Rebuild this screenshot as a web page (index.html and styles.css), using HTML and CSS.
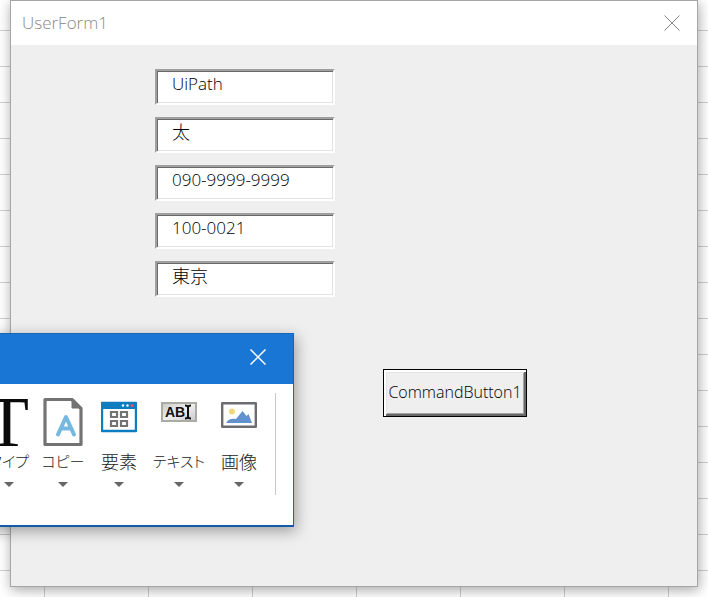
FILE: index.html
```html
<!DOCTYPE html>
<html lang="ja">
<head>
<meta charset="utf-8">
<meta name="viewport" content="width=device-width, initial-scale=1">
<title>UserForm1</title>
<link rel="stylesheet" href="styles.css">
</head>
<body>
<main class="window">
  <header class="titlebar">
    <h1 class="title">UserForm1</h1>
    <button class="close" type="button" aria-label="閉じる">
      <svg width="16" height="16" viewBox="0 0 16 16"><path d="M.5 .5l15 15M15.5 .5l-15 15"/></svg>
    </button>
  </header>
  <form class="form">
    <div class="fields">
      <input class="field" type="text" aria-label="氏名" value="UiPath">
      <input class="field kanji" type="text" aria-label="名前" value="太">
      <input class="field" type="text" aria-label="電話番号" value="090-9999-9999">
      <input class="field" type="text" aria-label="郵便番号" value="100-0021">
      <input class="field kanji" type="text" aria-label="住所" value="東京">
    </div>
    <button class="command" type="button">CommandButton1</button>
  </form>
</main>

<section class="recorder" aria-label="レコーダー">
  <header class="recorder-bar">
    <button class="close light" type="button" aria-label="閉じる">
      <svg width="16" height="16" viewBox="0 0 16 16"><path d="M.5 .5l15 15M15.5 .5l-15 15"/></svg>
    </button>
  </header>
  <div class="tools">
    <button class="tool" type="button">
      <svg class="icon" width="48" height="50" viewBox="0 0 48 50"><text class="type-letter" x="22" y="49">T</text></svg>
      <span class="label kana">タイプ</span><span class="arrow"></span>
    </button>
    <button class="tool" type="button">
      <svg class="icon" width="40" height="50" viewBox="0 0 40 50">
        <path d="M2 2.500h27l9 9v36h-36z" fill="#fff" stroke="#737373" stroke-width="3.200" stroke-linejoin="round"/>
        <path d="M29 2v9h9z" fill="#737373" stroke="#737373"/>
        <path d="M15 37.500l8-17.500 8 17.500M18 31.500h10" class="copy-mark"/>
      </svg>
      <span class="label kana">コピー</span><span class="arrow"></span>
    </button>
    <button class="tool" type="button">
      <svg class="icon" width="36" height="50" viewBox="0 0 36 50">
        <path d="M1 6h34v28H1z" fill="#fff" stroke="#0e7dbf" stroke-width="2.400" stroke-linejoin="round"/>
        <path d="M0 5.500h36v6.500H0z" fill="#0e7dbf"/>
        <circle cx="22" cy="8.500" r="1.200" fill="#fff"/><circle cx="26.500" cy="8.500" r="1.200" fill="#fff"/><circle cx="31" cy="8.500" r="1.500" fill="#ef5064"/>
        <path d="M10 15h6v5h-6zM20 15h6v5h-6zM10 24h6v5h-6zM20 24h6v5h-6z" fill="none" stroke="#737373" stroke-width="2.200"/>
      </svg>
      <span class="label">要素</span><span class="arrow"></span>
    </button>
    <button class="tool" type="button">
      <svg class="icon" width="36" height="50" viewBox="0 0 36 50">
        <defs><linearGradient id="shine" x1="0" y1="0" x2="1" y2="1"><stop offset="0" stop-color="#c9cac9"/><stop offset=".5" stop-color="#eeeeed"/><stop offset="1" stop-color="#c8c8d0"/></linearGradient></defs>
        <path d="M1 6h34v18H1z" fill="url(#shine)" stroke="#aaaba3" stroke-width="2"/>
        <text class="text-letters" x="4" y="20">AB</text>
        <path d="M24 8.500q3 0 3 2v9q0 2-3 2M30 8.500q-3 0-3 2v9q0 2 3 2" fill="none" stroke="#111" stroke-width="2"/>
      </svg>
      <span class="label kana">テキスト</span><span class="arrow"></span>
    </button>
    <button class="tool" type="button">
      <svg class="icon" width="36" height="50" viewBox="0 0 36 50">
        <path d="M1.200 6.200h33.600v23.600H1.200z" fill="#fff" stroke="#6c6d70" stroke-width="2.400" stroke-linejoin="round"/>
        <circle cx="11" cy="14.500" r="3" fill="#f0d878"/>
        <path d="M5 26c2-4 6-5 10-4l6.500-8 4 5 2-2 3.500 9z" fill="#6292cd"/>
      </svg>
      <span class="label">画像</span><span class="arrow"></span>
    </button>
  </div>
</section>
</body>
</html>
```

FILE: styles.css
```css
* {
  box-sizing: border-box;
}

body {
  margin: 0;
  min-height: 100vh;
  padding: 0 10px 10px;
  overflow: hidden;
  display: flex;
  position: relative;
  font-family: "Open Sans", "Noto Sans CJK JP", sans-serif;
  /* spreadsheet gridlines */
  background-color: #fff;
  background-image:
    linear-gradient(#d0d0d0 1px, transparent 1px),
    linear-gradient(90deg, #d0d0d0 1px, transparent 1px);
  background-size: 100% 36px, 104px 100%;
  background-position: 0 30px, 44px 0;
}

button {
  margin: 0;
  padding: 0;
  border: 0;
  background: none;
  color: inherit;
  font: inherit;
}

svg {
  display: block;
}

.window {
  flex: 1;
  display: flex;
  flex-direction: column;
  background: #efefef;
  border: 1px solid #a6a6a6;
  box-shadow: 1px 3px 12px rgba(0, 0, 0, 0.35);
}

.titlebar {
  display: flex;
  align-items: center;
  justify-content: space-between;
  height: 44px;
  padding: 0 17px 0 11px;
  background: #fff;
}

.title {
  margin: 0;
  color: #888;
  font: 300 17px/24px "Open Sans", sans-serif;
}

.close path {
  fill: none;
  stroke: #888;
  stroke-width: 1;
}

.light path {
  stroke: #fff;
  stroke-width: 1.5;
}

.form {
  display: flex;
  flex-direction: column;
  align-items: flex-start;
  gap: 72px;
  padding: 24px 24px 24px 144px;
}

.fields {
  display: flex;
  flex-direction: column;
  gap: 12px;
}

.field {
  width: 180px;
  height: 36px;
  padding: 0 15px 8px;
  border: 2px solid;
  border-color: #a0a0a0 #fff #fff #a0a0a0;
  border-radius: 0;
  outline: 0;
  background: #fff;
  box-shadow: inset 1px 1px #696969, inset -1px -1px #e3e3e3;
  color: #000;
  font: 300 17px/24px "Open Sans", sans-serif;
}

.kanji {
  font: 300 18px/24px "Noto Sans CJK JP", sans-serif;
}

.command {
  width: 144px;
  height: 48px;
  margin-left: 228px;
  padding-bottom: 2px;
  border: 1px solid #000;
  background: #efefef;
  box-shadow:
    inset 2px 2px #fff,
    inset -2px -2px #696969,
    inset 3px 3px #e3e3e3,
    inset -3px -3px #a0a0a0;
  color: #000;
  font-weight: 300;
  font-size: 16px;
  white-space: nowrap;
}

/* floating toolbar, partly past the left edge */
.recorder {
  position: absolute;
  top: 333px;
  left: -18px;
  background: #fff;
  border: 1px solid #1565b8;
  border-bottom: 2px solid #125ba5;
  box-shadow: 2px 4px 14px rgba(0, 0, 0, 0.35);
}

.recorder-bar {
  display: flex;
  align-items: center;
  justify-content: flex-end;
  height: 50px;
  padding: 0 27px 4px;
  background: #1976d4;
}

.tools {
  display: grid;
  grid-template-columns: 52px 56px 56px 64px 56px;
  margin: 9px 17px 30px 0;
  padding-right: 8px;
  border-right: 1px solid #c8c8c8;
}

.tool {
  display: flex;
  flex-direction: column;
  align-items: center;
  padding: 4px 0 8px;
}

.label {
  margin-top: 2px;
  color: #222;
  font: 300 18px/24px "Noto Sans CJK JP", sans-serif;
  white-space: nowrap;
}

.kana {
  font-size: 15px;
  font-feature-settings: "palt";
}

.arrow {
  margin-top: 9px;
  border: 5px solid transparent;
  border-top-color: #666;
  border-bottom: 0;
}

.type-letter {
  fill: #0a0a0a;
  font: 72px "Liberation Serif", serif;
  text-anchor: middle;
}

.copy-mark {
  fill: none;
  stroke: #75b9e1;
  stroke-width: 4;
  stroke-linecap: round;
  stroke-linejoin: round;
}

.text-letters {
  fill: #111;
  font: 700 14px "Liberation Sans", sans-serif;
}
```
